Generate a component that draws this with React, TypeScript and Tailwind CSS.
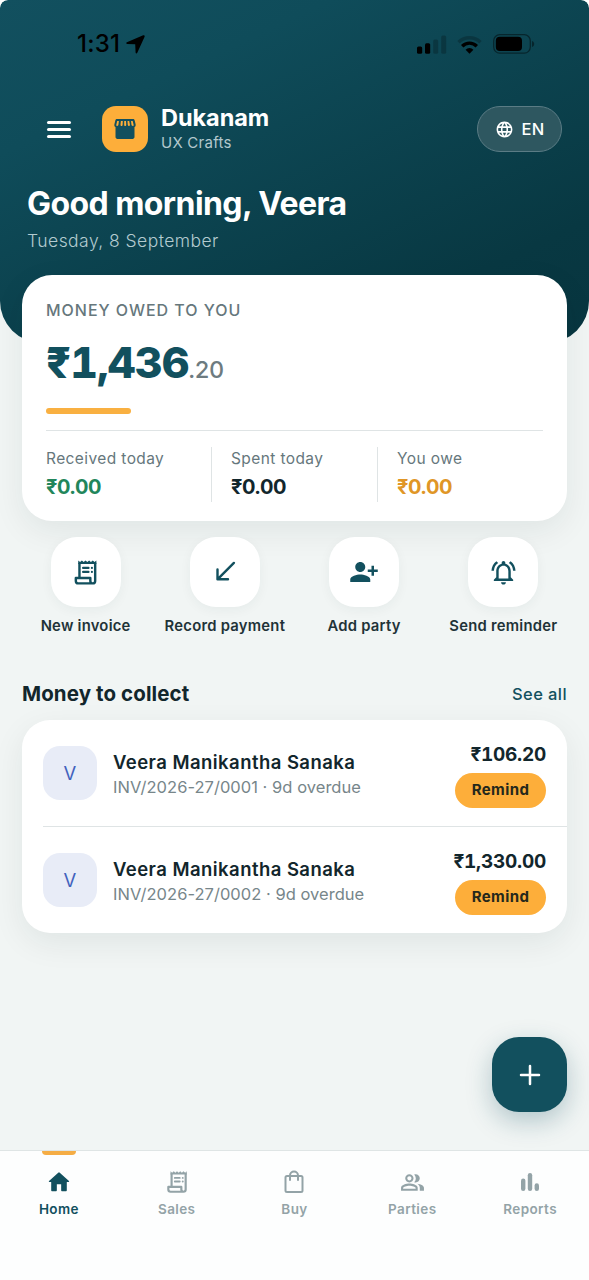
import React, { useState } from 'react';
import {
    MdPersonAddAlt1,
    MdOutlineNotificationsActive,
    MdOutlinePeopleAlt,
    MdLanguage,
} from 'react-icons/md';

interface Invoice {
    id: string;
    party: string;
    overdue: string;
    amount: string;
}

type TabKey = 'home' | 'sales' | 'buy' | 'parties' | 'reports';

const INVOICES: Invoice[] = [
    { id: 'INV/2026-27/0001', party: 'Veera Manikantha Sanaka', overdue: '9d overdue', amount: '₹106.20' },
    { id: 'INV/2026-27/0002', party: 'Veera Manikantha Sanaka', overdue: '9d overdue', amount: '₹1,330.00' },
];

const StoreIcon = () => (
    <svg width="22" height="22" viewBox="0 0 22 22" fill="#12505e">
        <path fillRule="evenodd" d="M3 1h16c.8 0 1.4.5 1.6 1.2l1 4c.3 1.300-.2 2.300-1.100 2.900V19c0 1.100-.8 1.900-1.900 1.900H3.400c-1.100 0-1.900-.8-1.900-1.900V9.100C.600 8.500.100 7.500.400 6.200l1-4C1.600 1.500 2.200 1 3 1Zm.200 2-.9 3.800c-.1.800.3 1.200.9 1.200.7 0 1.100-.5 1.200-1.200L4.900 3H3.200Zm3.700 0-.4 3.800c0 .8.4 1.200 1 1.200s1.100-.4 1.100-1.200L8.800 3H6.900Zm3.300 0v3.800c0 .8.4 1.200 1 1.200s1-.4 1-1.200L12 3h-1.800Zm3.300 0 .3 3.800c.1.800.5 1.200 1.100 1.200s1-.4 1-1.200L15.200 3h-1.700Zm3.500 0 .5 3.800c.1.700.6 1.200 1.300 1.200.6 0 1-.4.8-1.200L18.700 3H17Z" />
    </svg>
);

const ReceiptIcon: React.FC<{ size: number }> = ({ size }) => (
    <svg width={size} height={size} viewBox="0 0 24 24" fill="none" stroke="currentColor" strokeWidth="2" strokeLinejoin="round">
        <path d="M7 15.500V4M20 4v15a2 2 0 0 1-2 2H6a2 2 0 0 1-2-2v-2.500h12V19c0 1.200.8 2 2 2" />
        <path fill="currentColor" stroke="none" d="M6 2l1.500 1.400L9 2l1.500 1.400L12 2l1.500 1.400L15 2l1.500 1.400L18 2l1.500 1.400L21 2v3H6Z" />
        <path strokeLinecap="round" strokeWidth="1.800" d="M10 8.200h4.500M10 11.500h4.500M17.300 8.200h.01M17.300 11.500h.01" />
    </svg>
);

const ArrowIcon = () => (
    <svg width="28" height="28" viewBox="0 0 28 28" fill="none" stroke="currentColor" strokeWidth="2.400" strokeLinecap="round" strokeLinejoin="round">
        <path d="M22.900 4.900 6.500 21.300M6.500 11.500v9.800h10.500" />
    </svg>
);

const HomeIcon = () => (
    <svg width="26" height="26" viewBox="0 0 24 24" fill="currentColor">
        <path d="M10 19.500v-5.500h4v5.500c0 .6.4 1 1 1h3.200c.6 0 1-.4 1-1V12h1.700c.5 0 .7-.6.3-.9l-8.500-7.700a1 1 0 0 0-1.400 0l-8.500 7.700c-.4.3-.2.900.3.900h1.700v7.500c0 .6.4 1 1 1H9c.6 0 1-.4 1-1Z" />
    </svg>
);

const BagIcon = () => (
    <svg width="24" height="24" viewBox="0 0 24 24" fill="none" stroke="currentColor" strokeWidth="2" strokeLinecap="round">
        <rect x="3.500" y="6" width="17" height="16" rx="1.500" />
        <path d="M8 10V5.500a4 4 0 0 1 8 0V10" />
    </svg>
);

const BarsIcon = () => (
    <svg width="24" height="24" viewBox="0 0 24 24" fill="currentColor">
        <rect x="3" y="8.500" width="4.400" height="12.500" rx="2.200" />
        <rect x="9.800" y="3" width="4.400" height="18" rx="2.200" />
        <rect x="16.600" y="13.200" width="4.400" height="7.800" rx="2.200" />
    </svg>
);

const ACTIONS = [
    { label: 'New invoice', icon: <ReceiptIcon size={29} /> },
    { label: 'Record payment', icon: <ArrowIcon /> },
    { label: 'Add party', icon: <MdPersonAddAlt1 size={30} /> },
    { label: 'Send reminder', icon: <MdOutlineNotificationsActive size={29} /> },
];

const TABS: { key: TabKey; label: string; icon: React.ReactNode }[] = [
    { key: 'home', label: 'Home', icon: <HomeIcon /> },
    { key: 'sales', label: 'Sales', icon: <ReceiptIcon size={26} /> },
    { key: 'buy', label: 'Buy', icon: <BagIcon /> },
    { key: 'parties', label: 'Parties', icon: <MdOutlinePeopleAlt size={25} /> },
    { key: 'reports', label: 'Reports', icon: <BarsIcon /> },
];

const StatusBar = () => (
    <div className="flex h-[88px] items-center justify-between pr-[54px] pl-[77px] text-black">
        <div className="flex items-center gap-[6px]">
            <span className="text-[24px] leading-[30px] font-medium tracking-[0.2px]">1:31</span>
            <svg width="19" height="19" viewBox="0 0 19 19" fill="currentColor">
                <path d="M17.200.3.900 7.200c-1.100.5-.9 1.600.2 1.700l8.100.4.4 8.300c.1 1.100 1.200 1.300 1.700.2L18.600 1.800c.4-.9-.4-1.900-1.400-1.500Z" />
            </svg>
        </div>
        <div className="flex items-center">
            <svg width="30" height="19" viewBox="0 0 30 19" fill="currentColor">
                <rect x="0" y="11.500" width="5.200" height="7.200" rx="1.500" />
                <rect x="8" y="8.200" width="5.200" height="10.500" rx="1.500" />
                <rect x="16.200" y="4.500" width="5" height="14.200" rx="1.500" opacity=".22" />
                <rect x="24.200" y="0.500" width="5" height="18.200" rx="1.500" opacity=".22" />
            </svg>
            <svg className="ml-[10px]" width="25" height="19" viewBox="0 0 25 19" fill="none" stroke="currentColor" strokeWidth="3.400">
                <path d="M1.500 7.300a15.500 15.500 0 0 1 22 0" opacity=".22" />
                <path d="M5.200 11.200a10.300 10.300 0 0 1 14.600 0" />
                <path d="M12.500 18.700 8.600 14.700a5.600 5.600 0 0 1 7.800 0Z" fill="currentColor" stroke="none" />
            </svg>
            <svg className="ml-[11px]" width="42" height="20" viewBox="0 0 42 20">
                <rect x=".700" y=".700" width="36.600" height="18.400" rx="6" fill="none" stroke="#000" strokeOpacity=".45" strokeWidth="1.300" />
                <rect x="2.800" y="2.800" width="26.200" height="14.200" rx="4" fill="#000" />
                <path d="M39 7v6c1.500-.5 2.200-1.600 2.200-3S40.500 7.500 39 7Z" fill="#000" fillOpacity=".45" />
            </svg>
        </div>
    </div>
);

const Header = () => (
    <header className="h-[343px] rounded-t-[8px] rounded-b-[42px] bg-linear-[155deg,#12505f_0%,#0f4c5a_25%,#083842_80%,#07353f_100%]">
        <StatusBar />
        <div className="mt-[18px] flex h-[46px] items-center pr-[27px] pl-[47px]">
            <button className="flex w-[24px] flex-col gap-[4px]" aria-label="Menu">
                <span className="h-[3px] rounded-full bg-white" />
                <span className="h-[3px] rounded-full bg-white" />
                <span className="h-[3px] rounded-full bg-white" />
            </button>
            <div className="ml-[31px] flex size-[46px] items-center justify-center rounded-[14px] bg-[#fdae3a]">
                <StoreIcon />
            </div>
            <div className="ml-[13px] flex-1">
                <div className="mt-px text-[23.500px] leading-[25px] font-bold tracking-[-0.050px] text-white">Dukanam</div>
                <div className="text-[15px] leading-[25px] tracking-[0.250px] text-[#b3c8cd]">UX Crafts</div>
            </div>
            <button className="flex h-[46px] w-[85px] items-center justify-center gap-[8px] rounded-full border border-[#5b7c85] bg-[#2e5760] text-[16.500px] font-medium tracking-[0.2px] text-white">
                <MdLanguage size={19} />
                EN
            </button>
        </div>
        <div className="pl-[27px]">
            <h1 className="mt-[32px] text-[32px] leading-[40px] font-bold tracking-[-0.570px] text-white">Good morning, Veera</h1>
            <p className="mt-[4px] text-[17.500px] leading-[26px] font-light tracking-[0.450px] text-[#b3cbd0]">Tuesday, 8 September</p>
        </div>
    </header>
);

const SummaryCard = () => (
    <section className="relative mx-[22px] mt-[-68px] h-[246px] rounded-[30px] bg-white px-[24px] pt-[25px] shadow-[0_10px_32px_rgba(20,40,45,0.075)]">
        <p className="text-[16px] leading-[21px] font-medium tracking-[0.970px] text-[#66777c]">MONEY OWED TO YOU</p>
        <div className="mt-[13px] flex h-[56px] items-baseline whitespace-nowrap tabular-nums">
            <span className="text-[43px] leading-[56px] font-extrabold tracking-[-0.850px] text-[#12505e]">₹1,436</span>
            <span className="text-[23.500px] font-medium tracking-[-0.5px] text-[#6d7b80]">.20</span>
        </div>
        <div className="mt-[18px] h-[6px] w-[85px] rounded-full bg-[#f9b041]" />
        <div className="mt-[16px] flex border-t border-[#dfe4e5] pt-[16px]">
            <Stat label="Received today" value="₹0.00" className="w-[165px]" valueClass="text-[#22865b]" />
            <Stat label="Spent today" value="₹0.00" className="w-[166px] border-l border-[#dfe4e5] pl-[19px]" valueClass="text-[#12262c]" />
            <Stat label="You owe" value="₹0.00" className="flex-1 border-l border-[#dfe4e5] pl-[19px]" valueClass="text-[#e09626]" />
        </div>
    </section>
);

const Stat: React.FC<{ label: string; value: string; className: string; valueClass: string }> = ({ label, value, className, valueClass }) => (
    <div className={`h-[55px] ${className}`}>
        <div className="text-[15.500px] leading-[23px] tracking-[0.4px] text-[#66777c]">{label}</div>
        <div className={`mt-[4px] text-[20px] leading-[26px] font-bold tracking-[-0.5px] ${valueClass}`}>{value}</div>
    </div>
);

const QuickActions = () => (
    <div className="relative mx-[16px] mt-[16px] grid grid-cols-4">
        {ACTIONS.map(action => (
            <button key={action.label} className="flex flex-col items-center">
                <span className="flex size-[70px] items-center justify-center rounded-[26px] bg-white text-[#12505e] shadow-[0_3px_12px_rgba(15,50,60,0.050)]">
                    {action.icon}
                </span>
                <span className="mt-[8px] text-[14.800px] leading-[22px] font-semibold tracking-[0.250px] whitespace-nowrap text-[#1f3338]">{action.label}</span>
            </button>
        ))}
    </div>
);

const InvoiceRow: React.FC<{ invoice: Invoice; first: boolean }> = ({ invoice, first }) => (
    <li className={`ml-[21px] flex items-center pr-[21px] ${first ? 'h-[106px]' : 'h-[107px] border-t border-[#dfe4e5]'}`}>
        <div className="flex size-[54px] items-center justify-center rounded-[17px] bg-[#e8ecf7] pt-px text-[18.500px] text-[#4262bd]">V</div>
        <div className="ml-[16px] flex-1 pt-[3px]">
            <div className="text-[18.500px] leading-[25px] font-semibold tracking-[0.450px] text-[#12262c]">{invoice.party}</div>
            <div className="text-[16.500px] leading-[24px] tracking-[0.030px] text-[#77868a]">{invoice.id} · {invoice.overdue}</div>
        </div>
        <div className="flex flex-col items-end pt-[3px]">
            <div className="text-[19px] leading-[25px] font-bold tracking-[-0.250px] text-[#12262c] tabular-nums">{invoice.amount}</div>
            <button className="mt-[6px] h-[35px] w-[91px] rounded-full bg-[#fdae3a] text-[15px] font-bold tracking-[0.4px] text-[#25281c]">Remind</button>
        </div>
    </li>
);

const TabBar: React.FC<{ active: TabKey; onSelect: (key: TabKey) => void }> = ({ active, onSelect }) => (
    <nav className="grid h-[130px] grid-cols-5 border-t border-[#dfe5e5] bg-[#fdfefe]">
        {TABS.map(tab => (
            <button
                key={tab.key}
                onClick={() => onSelect(tab.key)}
                className={`flex flex-col items-center ${tab.key === active ? 'text-[#12505e]' : 'text-[#93a3a7]'}`}
            >
                <span className={`h-[4px] w-[34px] rounded-b-[4px] ${tab.key === active ? 'bg-[#f5ad45]' : ''}`} />
                <span className="mt-[15px] flex h-[24px] items-center">{tab.icon}</span>
                <span className="mt-[5px] text-[13.500px] leading-[20px] font-semibold tracking-[0.4px]">{tab.label}</span>
            </button>
        ))}
    </nav>
);

export default function App() {
    const [tab, setTab] = useState<TabKey>('home');

    return (
        <div className="bg-white font-['Inter',sans-serif]">
            <div className="flex h-[1280px] w-[589px] flex-col overflow-hidden rounded-t-[8px] bg-[#f1f5f4]">
                <Header />
                <SummaryCard />
                <QuickActions />
                <div className="mx-[22px] mt-[42px] flex h-[30px] items-center justify-between">
                    <h2 className="text-[20.500px] font-bold tracking-[0.100px] text-[#12262c]">Money to collect</h2>
                    <button className="text-[16.500px] font-medium tracking-[0.4px] text-[#12505e]">See all</button>
                </div>
                <ul className="mx-[22px] mt-[11px] h-[213px] rounded-[28px] bg-white shadow-[0_10px_32px_rgba(20,40,45,0.075)]">
                    {INVOICES.map((invoice, i) => <InvoiceRow key={invoice.id} invoice={invoice} first={i === 0} />)}
                </ul>
                <div className="mr-[22px] mb-[38px] mt-auto flex justify-end">
                    <button className="flex size-[75px] items-center justify-center rounded-[27px] bg-[#12505e] text-white shadow-[0_9px_26px_rgba(15,76,92,0.280)]" aria-label="Add">
                        <svg width="22" height="22" viewBox="0 0 22 22" fill="none" stroke="currentColor" strokeWidth="2.500" strokeLinecap="round">
                            <path d="M11 2v18M2 11h18" />
                        </svg>
                    </button>
                </div>
                <TabBar active={tab} onSelect={setTab} />
            </div>
        </div>
    );
}
